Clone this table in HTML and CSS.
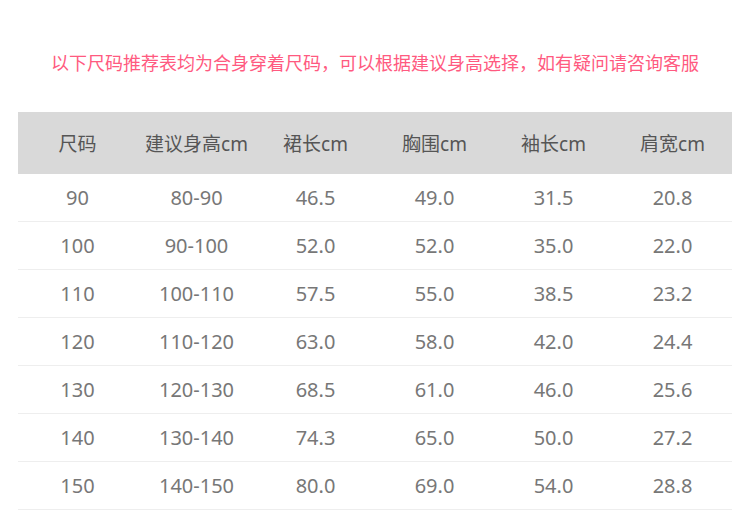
FILE: index.html
```html
<!DOCTYPE html>
<html lang="zh-CN">
<head>
<meta charset="utf-8">
<link rel="stylesheet" href="styles.css">
</head>
<body>
<div class="page">
  <p class="note">以下尺码推荐表均为合身穿着尺码，可以根据建议身高选择，如有疑问请咨询客服</p>
  <table class="size-table">
    <thead>
      <tr><th>尺码</th><th>建议身高cm</th><th>裙长cm</th><th>胸围cm</th><th>袖长cm</th><th>肩宽cm</th></tr>
    </thead>
    <tbody>
      <tr><td>90</td><td>80-90</td><td>46.5</td><td>49.0</td><td>31.5</td><td>20.8</td></tr>
      <tr><td>100</td><td>90-100</td><td>52.0</td><td>52.0</td><td>35.0</td><td>22.0</td></tr>
      <tr><td>110</td><td>100-110</td><td>57.5</td><td>55.0</td><td>38.5</td><td>23.2</td></tr>
      <tr><td>120</td><td>110-120</td><td>63.0</td><td>58.0</td><td>42.0</td><td>24.4</td></tr>
      <tr><td>130</td><td>120-130</td><td>68.5</td><td>61.0</td><td>46.0</td><td>25.6</td></tr>
      <tr><td>140</td><td>130-140</td><td>74.3</td><td>65.0</td><td>50.0</td><td>27.2</td></tr>
      <tr><td>150</td><td>140-150</td><td>80.0</td><td>69.0</td><td>54.0</td><td>28.8</td></tr>
    </tbody>
  </table>
</div>
</body>
</html>
```
FILE: styles.css
```css
html, body {
  margin: 0;
  padding: 0;
  background: #ffffff;
}
.page {
  width: 750px;
  padding-top: 48px;
  font-family: "Noto Sans", "Noto Sans CJK SC", sans-serif;
}
.note {
  margin: 0;
  height: 28px;
  line-height: 28px;
  text-align: center;
  font-size: 18px;
  color: #ff5a80;
  font-family: "Noto Sans CJK SC", sans-serif;
}
.size-table {
  margin: 36px 0 0 18px;
  width: 714px;
  border-collapse: collapse;
  table-layout: fixed;
}
.size-table th {
  height: 62px;
  padding: 0;
  background: #d9d9d9;
  color: #555555;
  font-weight: normal;
  font-size: 19px;
  text-align: center;
  font-family: "Noto Sans", "Noto Sans CJK SC", sans-serif;
}
.size-table td {
  height: 47px;
  padding: 0;
  border-bottom: 1px solid #eeeeee;
  color: #777777;
  font-size: 20px;
  text-align: center;
}
```
